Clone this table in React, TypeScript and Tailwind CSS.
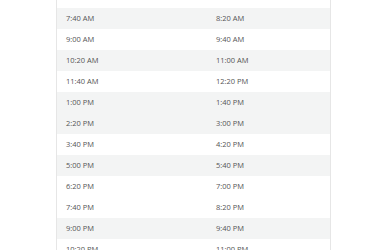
import React from "react";

const rows: [string, string, boolean][] = [
  ["6:20 AM", "7:00 AM", false],
  ["7:40 AM", "8:20 AM", true],
  ["9:00 AM", "9:40 AM", false],
  ["10:20 AM", "11:00 AM", true],
  ["11:40 AM", "12:20 PM", false],
  ["1:00 PM", "1:40 PM", true],
  ["2:20 PM", "3:00 PM", true],
  ["3:40 PM", "4:20 PM", false],
  ["5:00 PM", "5:40 PM", true],
  ["6:20 PM", "7:00 PM", false],
  ["7:40 PM", "8:20 PM", false],
  ["9:00 PM", "9:40 PM", true],
  ["10:20 PM", "11:00 PM", false],
];

export default function App() {
  return (
    <div
      className="w-[380px] h-[250px] bg-white overflow-hidden"
      style={{ fontFamily: '"Open Sans", sans-serif' }}
    >
      <div className="ml-[56px] w-[275px] -mt-[13px] border-l border-r border-[#e6e6e6] flex flex-col">
        {rows.map(([a, b, shaded], i) => (
          <div
            key={i}
            className={`grid grid-cols-[150px_1fr] h-[21px] items-center text-[7.5px] text-[#555] ${
              shaded ? "bg-[#f3f4f4]" : "bg-white"
            }`}
          >
            <div className="pl-[9px]">{i === 0 ? "" : a}</div>
            <div className="pl-[9px]">{i === 0 ? "" : b}</div>
          </div>
        ))}
      </div>
    </div>
  );
}
